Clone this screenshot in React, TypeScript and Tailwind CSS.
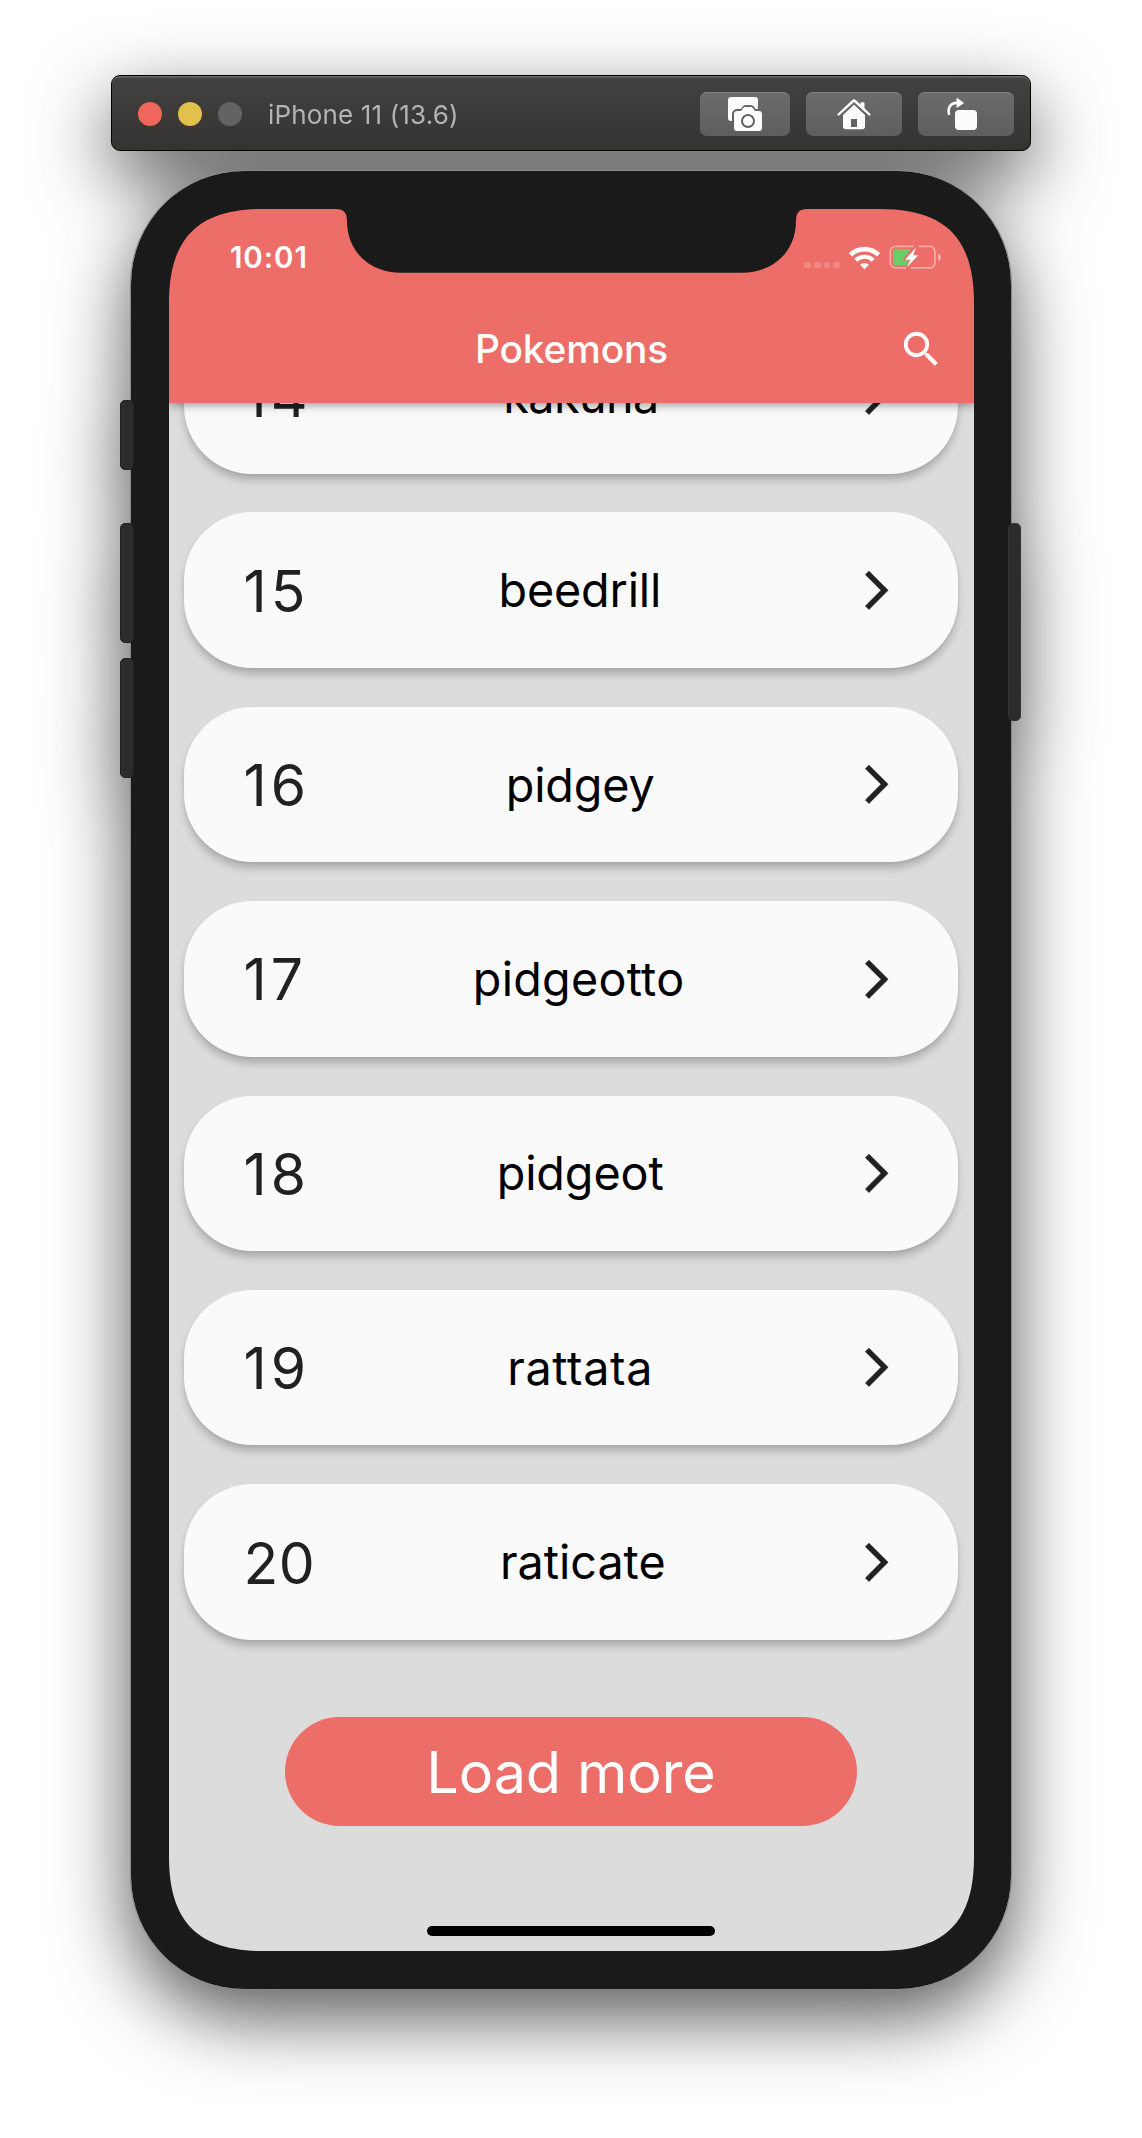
import React from "react";

const pokemons = [
  { id: 14, name: "kakuna", tracking: "tracking-[-0.6px]" },
  { id: 15, name: "beedrill", tracking: "tracking-[-0.15px]" },
  { id: 16, name: "pidgey", tracking: "tracking-[-0.1px]" },
  { id: 17, name: "pidgeotto", tracking: "tracking-[0.25px]" },
  { id: 18, name: "pidgeot", tracking: "tracking-[-0.1px]" },
  { id: 19, name: "rattata", tracking: "tracking-[0.65px]" },
  { id: 20, name: "raticate", tracking: "tracking-normal" },
];

function ToolButton({ className, children }: { className: string; children: React.ReactNode }) {
  return (
    <button
      className={`flex h-11 items-center justify-center rounded-[7px] bg-linear-to-b from-[#6d6c6a] to-[#5f5e5c] shadow-[inset_0_1px_0_#858482] ${className}`}
    >
      {children}
    </button>
  );
}

function CameraIcon() {
  return (
    <svg width="34" height="34" viewBox="0 0 34 34" fill="#fdfcfb">
      <path d="M3 0h24a3 3 0 0 1 3 3v9h-2.500c-1.500-2.500-2.500-4-5-4h-4.500c-2.500 0-3.500 1.500-5 4H9a5 5 0 0 0-5 5v7H3a3 3 0 0 1-3-3V3a3 3 0 0 1 3-3z" />
      <path
        fillRule="evenodd"
        d="M9 14h4l2-2.700c.700-.900 1.300-1.300 2.500-1.300h5c1.200 0 1.800.400 2.500 1.300L27 14h4a3 3 0 0 1 3 3v14a3 3 0 0 1-3 3H9a3 3 0 0 1-3-3V17a3 3 0 0 1 3-3zM20 17a7 7 0 1 0 0 14 7 7 0 0 0 0-14z"
      />
      <circle cx="20" cy="24" r="5" />
    </svg>
  );
}

function HomeIcon() {
  return (
    <svg width="34" height="31" viewBox="0 0 34 31" fill="#fdfcfb">
      <path d="M17 .2c.7 0 1.200.2 1.700.7l4.800 4.600V4.500c0-.8.4-1.200 1.200-1.200h1.600c.8 0 1.200.4 1.200 1.200v4.800l5.700 5.500c.6.600.5 1 .1 1.500-.6.600-1.200.5-1.700 0L17 2.900 2.400 16.300c-.5.500-1.100.600-1.700 0-.4-.5-.5-.9.1-1.500L15.300.9c.5-.5 1-.7 1.700-.7z" />
      <path fillRule="evenodd" d="M17 5.800 28 16v11.500a2.800 2.800 0 0 1-2.800 2.800H8.800A2.800 2.800 0 0 1 6 27.500V16zM14 20v8h6v-8z" />
    </svg>
  );
}

function RotateIcon() {
  return (
    <svg width="30" height="32" viewBox="0 0 30 32" fill="#fdfcfb">
      <path d="M2.200 16.800C.2 9.800 3.500 4.900 10 4.900" fill="none" stroke="#fdfcfb" strokeWidth="2.600" />
      <path d="M9.500.6c0-.6.500-.8 1-.4l6 4.200c.5.400.5.800 0 1.200l-6 4c-.5.400-1 .2-1-.4z" />
      <rect x="8" y="12" width="22" height="20" rx="4" />
    </svg>
  );
}

function Battery() {
  return (
    <svg width="52" height="25" viewBox="0 0 52 25" fill="none">
      <path d="M24.500 1.300H6.500a5.200 5.200 0 0 0-5.200 5.200v11.200a5.200 5.200 0 0 0 5.200 5.200H17M30 1.300h10.700a5.200 5.200 0 0 1 5.200 5.200v11.200a5.200 5.200 0 0 1-5.200 5.200H21.500" stroke="#fff" strokeOpacity=".42" strokeWidth="1.700" />
      <path d="M49 8.500c1.900.7 2.800 2.100 2.800 3.700S50.900 15.200 49 16z" fill="#fff" fillOpacity=".5" />
      <path d="M6.500 4H22l-8.300 10.500c-.4.600-.2 1 .5 1H20l-1.600 5H6.500A2.500 2.500 0 0 1 4 18V6.500A2.500 2.500 0 0 1 6.500 4z" fill="#69ce68" />
      <path d="M27 2.500 16 14.800h5.200L18.200 22 29.300 10.200h-5.100z" fill="#fff" />
    </svg>
  );
}

function StatusBar() {
  return (
    <div className="flex h-[97px] items-center justify-between pr-[33px] pl-[61px] text-white">
      <span className="text-[29.500px] leading-none font-semibold tracking-[0.9px]">10:01</span>
      <div className="flex items-center">
        <div className="mt-[15px] mr-[9px] flex gap-[3px]">
          {[0, 1, 2, 3].map((i) => (
            <span key={i} className="size-[6.700px] rounded-[2px] bg-white/18" />
          ))}
        </div>
        <svg className="mr-[9px]" width="31" height="24" viewBox="0 0 31 24" fill="none" stroke="#fff">
          <path d="M1.500 8.800a20 20 0 0 1 28 0" strokeWidth="4.600" />
          <path d="M6.800 14.300a12.400 12.400 0 0 1 17.400 0" strokeWidth="4.200" />
          <path d="M15.500 23.200 11 18.700a6.500 6.500 0 0 1 9 0z" fill="#fff" stroke="none" />
        </svg>
        <Battery />
      </div>
    </div>
  );
}

function AppHeader() {
  return (
    <header className="relative z-10 h-[194px] shrink-0 bg-[#ed6e68] shadow-[0_2px_9px_rgba(0,0,0,0.4)]">
      <StatusBar />
      <div className="grid h-[86px] grid-cols-[1fr_auto_1fr] items-center text-white">
        <h1 className="col-start-2 text-[38.900px] leading-none font-medium tracking-[-0.15px]">Pokemons</h1>
        <svg className="mr-[29px] justify-self-end" width="46.700" height="46.700" viewBox="0 0 24 24" fill="#fff">
          <path d="M15.500 14h-.79l-.28-.27A6.471 6.471 0 0 0 16 9.500 6.500 6.500 0 1 0 9.500 16c1.610 0 3.090-.59 4.230-1.570l.27.280v.79l5 4.990L20.490 19l-4.990-5zm-6 0C7.010 14 5 11.990 5 9.500S7.010 5 9.500 5 14 7.010 14 9.500 11.990 14 9.500 14z" />
        </svg>
      </div>
      <svg className="absolute top-0 left-0" width="805" height="64" viewBox="0 0 805 64" fill="#1a1a1a">
        <path d="M164 -1V0H167C175 0 178 4 178 12C178 42 200 63.700 232 63.700H573C605 63.700 627 42 627 12C627 4 630 0 638 0H641V-1Z" />
      </svg>
    </header>
  );
}

function PokemonCard({ id, name, tracking }: { id: number; name: string; tracking: string }) {
  return (
    <li className="flex h-[155.500px] shrink-0 items-center justify-between rounded-[68px] bg-[#fafafa] pr-[58px] pl-[59.500px] shadow-[0_7px_9px_-1px_rgba(0,0,0,0.22),0_1px_3px_rgba(0,0,0,0.06)]">
      <span className={`pt-[2px] text-[57px] leading-none text-[#212121] ${id < 20 ? "tracking-[4px]" : "tracking-[0.5px]"}`}>{id}</span>
      <span className={`-ml-[3px] pt-px text-[46.700px] leading-none text-black ${tracking}`}>{name}</span>
      <svg width="46.700" height="46.700" viewBox="0 0 24 24" fill="#212121" stroke="#212121" strokeWidth="0.400">
        <path d="M6.430 20.030 8.200 21.800l9.800-9.800L8.200 2.200 6.430 3.970 14.460 12z" />
      </svg>
    </li>
  );
}

export default function App() {
  return (
    <div className="flex h-[2138px] w-[1142px] flex-col items-center overflow-hidden bg-white pt-[75px] font-['Inter',sans-serif]">
      <div className="flex flex-col items-center [filter:drop-shadow(0_27px_38px_rgba(0,0,0,0.66))]">
        <div className="flex h-[76px] w-[920px] items-center rounded-[9px] border border-black bg-linear-to-b from-[#43423f] to-[#353331] pt-[2px] pr-4 pl-[26px] shadow-[inset_0_1.500px_0_#6b6b67]">
          <div className="flex gap-4">
            <span className="size-6 rounded-full bg-[#ef665b]" />
            <span className="size-6 rounded-full bg-[#e2c04c]" />
            <span className="size-6 rounded-full bg-[#646361]" />
          </div>
          <span className="ml-[26px] pt-[2px] text-[26px] leading-none tracking-[0.15px] text-[#b5b4b2]">iPhone 11 (13.6)</span>
          <div className="ml-auto flex gap-4">
            <ToolButton className="w-[90px]"><CameraIcon /></ToolButton>
            <ToolButton className="w-[96px]"><HomeIcon /></ToolButton>
            <ToolButton className="w-[96px] pr-[8px]"><RotateIcon /></ToolButton>
          </div>
        </div>

        <div className="relative mt-[19px] h-[1820px] w-[882px] rounded-[114px] border border-[#8a8a8a] bg-[#1a1a1a] bg-clip-padding px-[38px] pt-[38px]">
          <span className="absolute top-[229px] -left-[11px] h-[70px] w-[14px] rounded-[5px] border border-[#202020] bg-[#2c2c2c]" />
          <span className="absolute top-[352px] -left-[11px] h-[120px] w-[14px] rounded-[5px] border border-[#202020] bg-[#2c2c2c]" />
          <span className="absolute top-[487px] -left-[11px] h-[120px] w-[14px] rounded-[5px] border border-[#202020] bg-[#2c2c2c]" />
          <span className="absolute top-[352px] -right-[10px] h-[198px] w-[13px] rounded-[5px] border border-[#343434] bg-[#2c2c2c]" />

          <main className="flex h-[1742px] w-[805px] flex-col bg-[#dcdcdc] [clip-path:path('M0_94C0_29_29_0_94_0H711C776_0_805_29_805_94V1648C805_1713_776_1742_711_1742H94C29_1742_0_1713_0_1648Z')]">
            <AppHeader />
            <ul className="-mt-[85px] flex flex-col gap-[38.900px] pr-[16px] pl-[15px]">
              {pokemons.map((p) => (
                <PokemonCard key={p.id} {...p} />
              ))}
            </ul>
            <button className="mt-[77.500px] mr-px flex h-[109px] w-[572px] shrink-0 items-center justify-center self-center rounded-full bg-[#ed6e68] pt-px text-[57.500px] leading-none tracking-[-0.1px] text-white">
              Load more
            </button>
            <div className="mt-auto mr-px mb-[15px] h-[10.500px] w-[288px] self-center rounded-full bg-black" />
          </main>
        </div>
      </div>
    </div>
  );
}
